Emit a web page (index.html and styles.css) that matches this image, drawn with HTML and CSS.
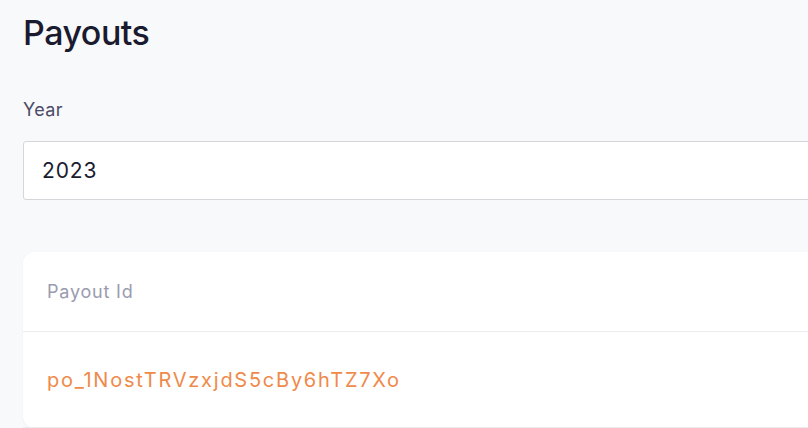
FILE: index.html
```html
<!DOCTYPE html>
<html lang="en">
<head>
<meta charset="utf-8">
<title>Payouts</title>
<link rel="stylesheet" href="styles.css">
</head>
<body>
<main class="page">
  <h1 class="title">Payouts</h1>
  <div class="field">
    <label class="field-label" for="year">Year</label>
    <div class="select" id="year">2023</div>
  </div>
  <section class="card">
    <div class="card-head">Payout Id</div>
    <div class="card-row"><a class="payout-link" href="#">po_1NostTRVzxjdS5cBy6hTZ7Xo</a></div>
  </section>
</main>
</body>
</html>
```
FILE: styles.css
```css
html, body {
  margin: 0;
  padding: 0;
  background: #f8f9fb;
  overflow: hidden;
}
body {
  font-family: Inter, "Noto Sans", sans-serif;
  color: #1b1b30;
}
.page {
  width: 1100px;
  padding: 13px 0 0 23px;
  display: flex;
  flex-direction: column;
}
.title {
  margin: 0;
  font-size: 34px;
  line-height: 40px;
  font-weight: 500;
  letter-spacing: -0.5px;
  color: #1b1b30;
}
.field {
  margin-top: 45px;
  display: flex;
  flex-direction: column;
  gap: 19px;
}
.field-label {
  font-size: 18px;
  line-height: 24px;
  letter-spacing: 0.4px;
  color: #4b4b66;
}
.select {
  height: 57px;
  border: 1px solid #d5d6da;
  border-radius: 3px;
  background: #fff;
  display: flex;
  align-items: center;
  padding-left: 18px;
  font-size: 21px;
  letter-spacing: 0.9px;
  color: #1b1b30;
}
.card {
  margin-top: 52px;
  background: #fff;
  border-radius: 12px;
  box-shadow: 0 1px 3px rgba(30, 30, 60, 0.04);
  display: flex;
  flex-direction: column;
}
.card-head {
  height: 79px;
  border-bottom: 1px solid #ececf0;
  display: flex;
  align-items: center;
  padding-left: 24px;
  font-size: 18px;
  letter-spacing: 0.8px;
  color: #9b9bb0;
}
.card-row {
  height: 95px;
  border-bottom: 1px solid #ececf0;
  display: flex;
  align-items: center;
  padding-left: 24px;
}
.payout-link {
  font-size: 20px;
  color: #ef8a4a;
  text-decoration: none;
  letter-spacing: 1.75px;
}
```
